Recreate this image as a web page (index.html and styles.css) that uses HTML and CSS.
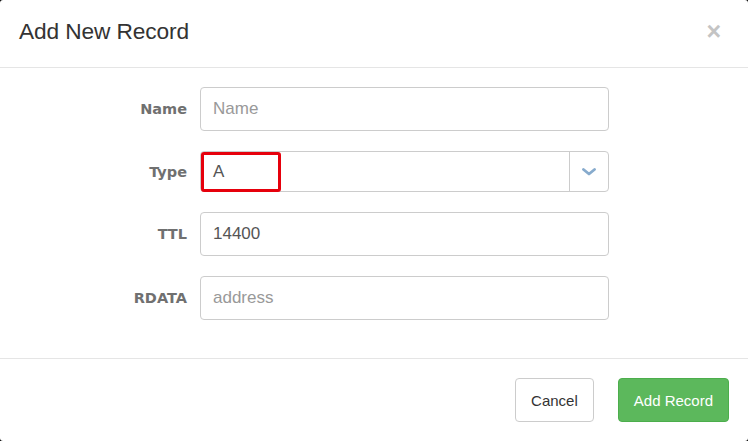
FILE: index.html
```html
<!DOCTYPE html>
<html>
<head>
<meta charset="utf-8">
<link rel="stylesheet" href="styles.css">
</head>
<body>
<div class="modal">
  <div class="modal-header">
    <h4 class="modal-title">Add New Record</h4>
    <span class="close">&times;</span>
  </div>
  <div class="modal-body">
    <div class="form-row">
      <label class="label">Name</label>
      <div class="input placeholder">Name</div>
    </div>
    <div class="form-row">
      <label class="label">Type</label>
      <div class="select">
        <div class="select-value">A</div>
        <div class="select-arrow">
          <svg width="14" height="8" viewBox="0 0 14 8"><path d="M1.5 1.5 L7 6 L12.5 1.5" fill="none" stroke="#87abcd" stroke-width="2.8" stroke-linecap="round" stroke-linejoin="round"/></svg>
        </div>
        <div class="highlight"></div>
      </div>
    </div>
    <div class="form-row">
      <label class="label">TTL</label>
      <div class="input">14400</div>
    </div>
    <div class="form-row">
      <label class="label">RDATA</label>
      <div class="input placeholder">address</div>
    </div>
  </div>
  <div class="modal-footer">
    <button class="btn btn-default">Cancel</button>
    <button class="btn btn-success">Add Record</button>
  </div>
</div>
</body>
</html>
```
FILE: styles.css
```css
html, body {
  margin: 0;
  padding: 0;
  background: #000;
}
body {
  width: 748px;
  height: 441px;
  overflow: hidden;
  font-family: "Liberation Sans", Arial, sans-serif;
}
.modal {
  width: 748px;
  height: 441px;
  background: #fff;
  border-radius: 3px;
  display: flex;
  flex-direction: column;
}
.modal-header {
  border-bottom: 1px solid #e5e5e5;
  display: flex;
  align-items: center;
  justify-content: space-between;
  padding: 0 27px 4px 19px;
  box-sizing: border-box;
  height: 68px;
}
.modal-title {
  margin: 0;
  font-size: 22.7px;
  font-weight: normal;
  color: #333;
  letter-spacing: -0.1px;
}
.close {
  font-size: 25px;
  font-weight: bold;
  color: #c4c4c4;
  line-height: 1;
  margin-top: 0;
}
.modal-body {
  padding: 19px 0 18px 0;
  display: flex;
  flex-direction: column;
  gap: 20px;
  border-bottom: 1px solid #e5e5e5;
  height: 291px;
  box-sizing: border-box;
}
.form-row {
  display: flex;
  align-items: center;
}
.label {
  text-align: right;
  font-family: "DejaVu Sans", Verdana, sans-serif;
  font-weight: bold;
  font-size: 14.5px;
  color: #707070;
  padding-right: 13px;
  box-sizing: border-box;
  width: 200px;
}
.input {
  width: 409px;
  height: 44px;
  box-sizing: border-box;
  border: 1px solid #ccc;
  border-radius: 4px;
  padding: 0 12px;
  display: flex;
  align-items: center;
  font-size: 17px;
  color: #555;
}
.input.placeholder {
  color: #999;
}
.select {
  position: relative;
  width: 409px;
  height: 41px;
  box-sizing: border-box;
  border: 1px solid #ccc;
  border-radius: 4px;
  display: flex;
}
.select-value {
  flex: 1;
  display: flex;
  align-items: center;
  padding-left: 12px;
  font-size: 17px;
  color: #555;
}
.select-arrow {
  width: 38px;
  border-left: 1px solid #ccc;
  display: flex;
  align-items: center;
  justify-content: center;
}
.select-arrow svg {
  display: block;
}
.highlight {
  position: absolute;
  left: 0;
  top: 0;
  width: 80px;
  height: 40px;
  box-sizing: border-box;
  border: 3px solid #e6000c;
  border-radius: 3px;
}
.modal-footer {
  flex: 1;
  display: flex;
  justify-content: flex-end;
  align-items: flex-start;
  padding: 19px 19px 0 0;
  gap: 24px;
}
.btn {
  height: 44px;
  padding: 0 15px;
  font-family: "Liberation Sans", Arial, sans-serif;
  font-size: 15px;
  border-radius: 4px;
  border: 1px solid #ccc;
  background: #fff;
  color: #333;
}
.btn-success {
  background: #5cb85c;
  border-color: #4cae4c;
  color: #fff;
}
```
